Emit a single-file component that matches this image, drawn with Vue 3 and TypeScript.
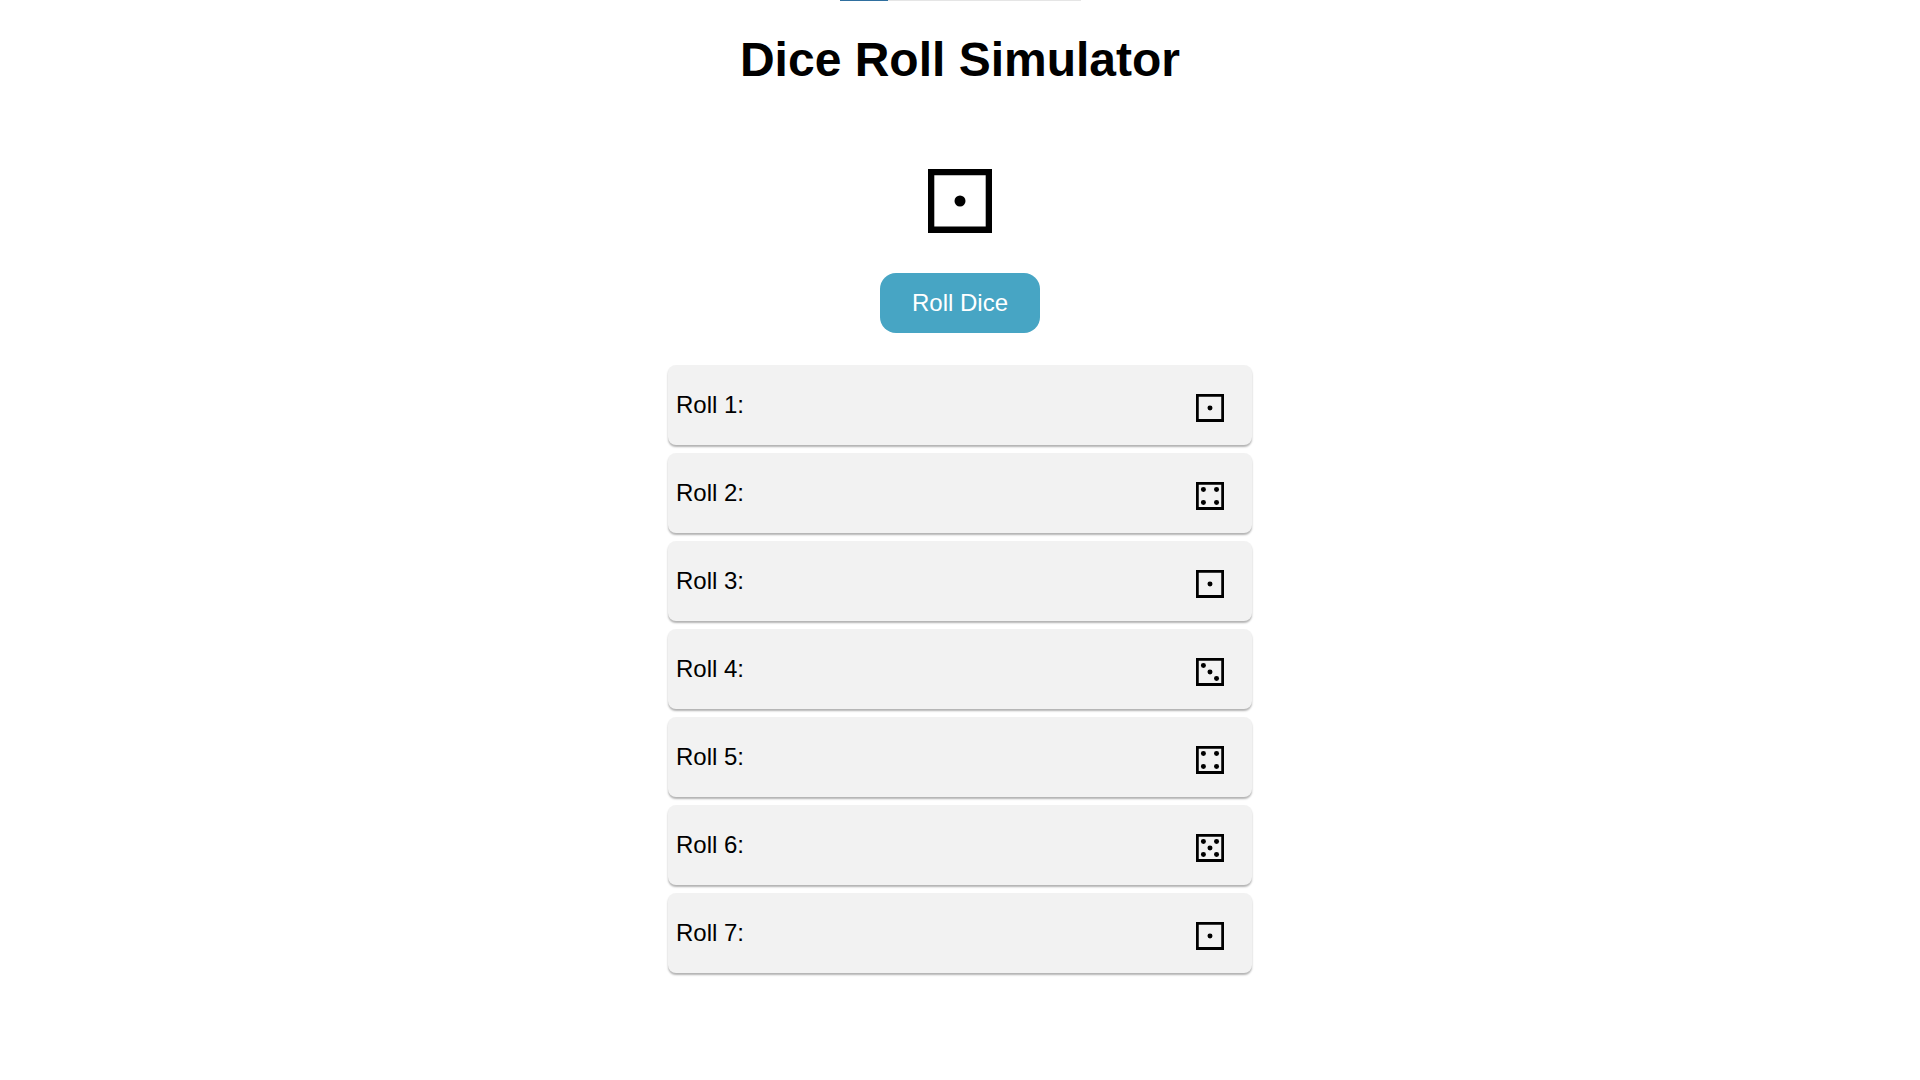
<script setup lang="ts">
import { ref } from 'vue'

type Face = 1 | 2 | 3 | 4 | 5 | 6

// Pip centres on a 64 x 64 die face
const pips: Record<Face, [number, number][]> = {
  1: [[32, 32]],
  2: [[17, 17], [47, 47]],
  3: [[17, 17], [32, 32], [47, 47]],
  4: [[17, 17], [47, 17], [17, 47], [47, 47]],
  5: [[17, 17], [47, 17], [32, 32], [17, 47], [47, 47]],
  6: [[17, 17], [47, 17], [17, 32], [47, 32], [17, 47], [47, 47]],
}

const current = ref<Face>(1)
const history = ref<Face[]>([1, 4, 1, 3, 4, 5, 1])

function rollDice(): void {
  const face = (Math.floor(Math.random() * 6) + 1) as Face
  current.value = face
  history.value.push(face)
}
</script>

<template>
  <div class="page">
    <div class="progress"><div class="progress-fill"></div></div>
    <main class="content">
      <h1 class="title">Dice Roll Simulator</h1>
      <svg class="die die-large" viewBox="0 0 64 64" role="img" :aria-label="`Die showing ${current}`">
        <path d="M0 0H64V64H0ZM6.3 6.3V57.4H57.7V6.3Z" fill-rule="evenodd" />
        <circle v-for="([x, y], i) in pips[current]" :key="i" :cx="x" :cy="y" r="5.5" />
      </svg>
      <button class="roll-button" type="button" @click="rollDice">Roll Dice</button>
      <ul class="history">
        <li v-for="(face, index) in history" :key="index" class="entry">
          <span>Roll {{ index + 1 }}:</span>
          <svg class="die die-small" viewBox="0 0 64 64" role="img" :aria-label="`Die showing ${face}`">
            <path d="M0 0H64V64H0ZM6.3 6.3V57.2H57.7V6.3Z" fill-rule="evenodd" />
            <circle v-for="([x, y], i) in pips[face]" :key="i" :cx="x" :cy="y" r="5.7" />
          </svg>
        </li>
      </ul>
    </main>
  </div>
</template>

<style>
body {
  margin: 0;
  background: #fff;
}
</style>

<style scoped>
.page {
  font-family: Arial, "Liberation Sans", sans-serif;
  color: #000;
}

.progress {
  width: 241px;
  height: 1px;
  margin: 0 auto;
  background: #e5e5e5;
}

.progress-fill {
  width: 20%;
  height: 100%;
  background: #2f6f9f;
}

.content {
  display: flex;
  flex-direction: column;
  align-items: center;
  padding: 32px 8px;
}

.title {
  margin: 0;
  font-size: 48px;
  line-height: 54px;
  font-weight: 700;
  text-align: center;
}

.die {
  display: block;
  flex: none;
  fill: #000;
}

.die-large {
  width: 64px;
  height: 64px;
  margin: 82px 0 40px;
}

.die-small {
  width: 28px;
  height: 28px;
  margin-top: 6px;
}

.roll-button {
  padding: 16px 32px;
  border: 0;
  border-radius: 16px;
  background: #47a5c4;
  color: #fff;
  font-family: inherit;
  font-size: 24px;
  line-height: 28px;
  cursor: pointer;
}

.roll-button:hover {
  background: #2e8baf;
}

.history {
  display: flex;
  flex-direction: column;
  gap: 8px;
  box-sizing: border-box;
  width: 100%;
  max-width: 584px;
  margin: 32px 0 0;
  padding: 0;
  list-style: none;
}

.entry {
  display: flex;
  align-items: center;
  justify-content: space-between;
  padding: 23px 28px 23px 8px;
  border-radius: 8px;
  background: #f2f2f2;
  box-shadow: 0 2px 2px rgba(0, 0, 0, 0.3);
  font-size: 24px;
  line-height: 28px;
}
</style>
